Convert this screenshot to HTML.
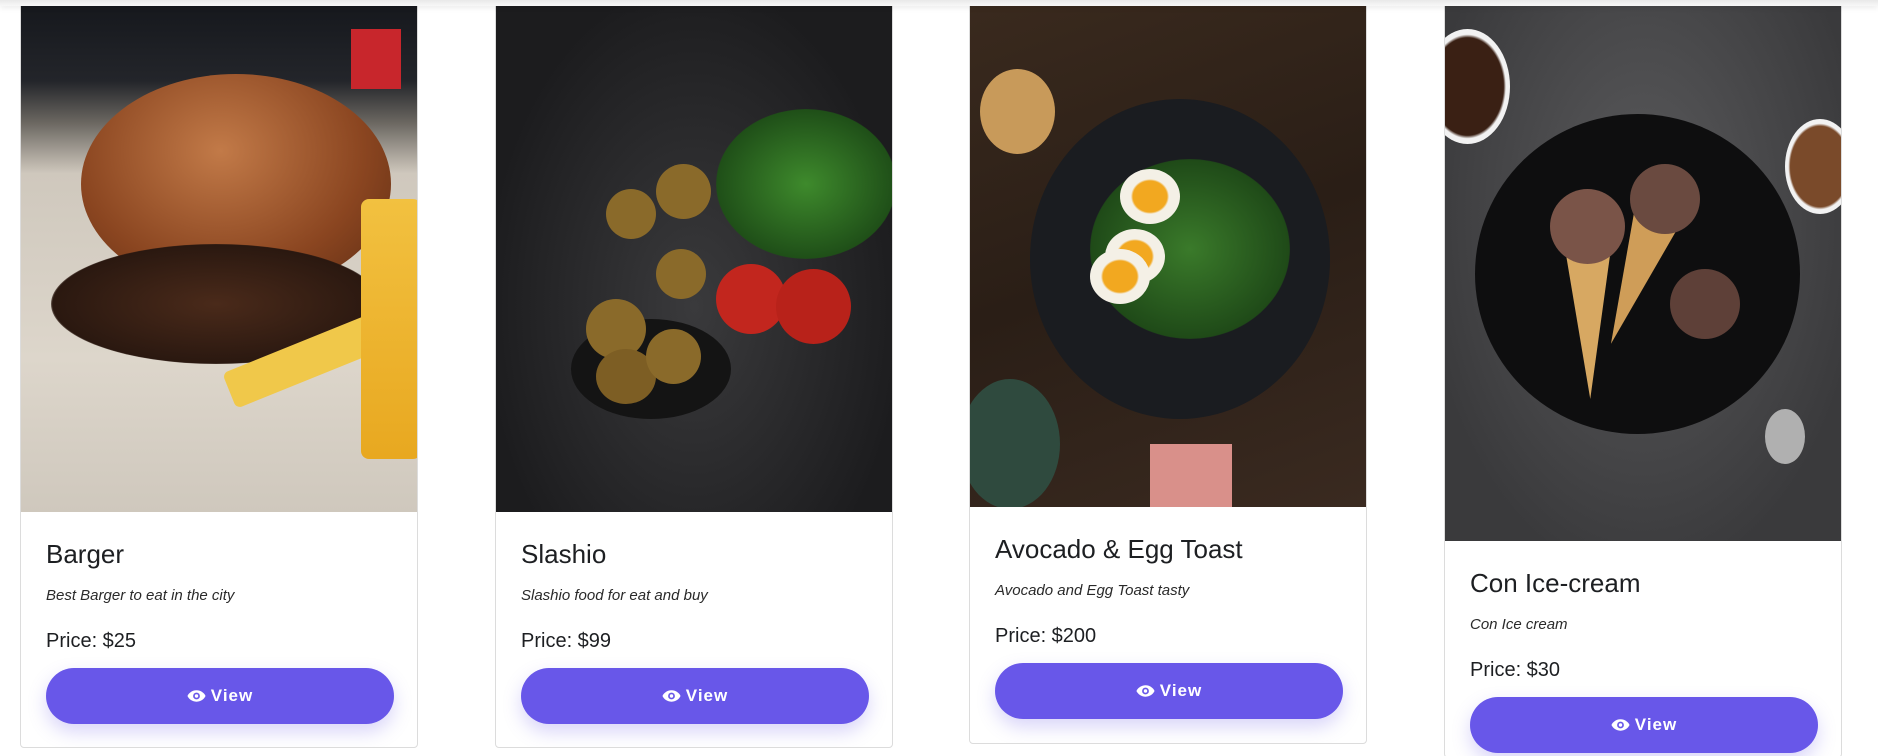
<!DOCTYPE html>
<html style="width:1878px;height:756px;overflow:hidden"><head><meta charset="utf-8"><style>
*{box-sizing:border-box;margin:0;padding:0}
html,body{width:1878px;height:756px;overflow:hidden}
body{background:#fff;position:relative;font-family:"Liberation Sans",sans-serif;color:#212529}
.topbar{position:absolute;left:0;top:0;width:1878px;height:6px;background:linear-gradient(#e9e9e9,#f8f8f8);box-shadow:0 2px 6px rgba(0,0,0,.08);z-index:3}
.card{position:absolute;width:398px;border:1px solid #dcdcdc;border-radius:4px;background:#fff;overflow:hidden}
.img{position:relative;width:100%;overflow:hidden}
.b{position:relative}
.t{position:absolute;left:25px;font-size:26px;line-height:30px;white-space:nowrap;color:#1d1f22}
.d{position:absolute;left:25px;font-size:15px;line-height:18px;font-style:italic;color:#2a2a2a}
.p{position:absolute;left:25px;font-size:20px;line-height:24px;color:#1d1f22}
.btn{position:absolute;left:25px;width:348px;height:56px;border-radius:28px;background:#6857e9;color:#fff;font-weight:bold;font-size:17px;letter-spacing:1px;display:flex;align-items:center;justify-content:center;box-shadow:0 8px 18px rgba(104,87,233,.25)}
.btn svg{margin-right:5px}
.sh{position:absolute;border-radius:50%}
</style></head><body>
<div class="topbar"></div>

<!-- card 1 -->
<div class="card" style="left:20px;top:-2px;height:750px">
 <div class="img" style="height:513px;background:linear-gradient(180deg,#15171c 0%,#23252a 16%,#6a6660 24%,#cfc8bd 34%,#ddd6cb 70%,#cfc8bd 100%)">
  <div class="sh" style="left:60px;top:75px;width:310px;height:220px;background:radial-gradient(ellipse at 45% 35%,#c27a48,#8a4520 60%,#5a2a12)"></div>
  <div class="sh" style="left:30px;top:245px;width:330px;height:120px;background:radial-gradient(ellipse,#4a2a1a,#2a1810 70%,transparent 72%)"></div>
  <div style="position:absolute;left:200px;top:330px;width:230px;height:38px;background:#f0c84a;transform:rotate(-22deg);border-radius:6px"></div>
  <div style="position:absolute;left:340px;top:200px;width:60px;height:260px;background:linear-gradient(#f2c140,#e8a820);border-radius:8px"></div>
  <div style="position:absolute;left:330px;top:30px;width:50px;height:60px;background:#c8262c"></div>
 </div>
 <div class="b">
  <div class="t" style="top:27px">Barger</div>
  <div class="d" style="top:75px">Best Barger to eat in the city</div>
  <div class="p" style="top:117px">Price: $25</div>
  <div class="btn" style="top:156px"><svg width="19" height="14" viewBox="0 0 20 14"><path d="M10 1C5 1 1.5 4.5 0.5 7 1.5 9.5 5 13 10 13s8.5-3.5 9.5-6C18.5 4.5 15 1 10 1z" fill="#fff"/><circle cx="10" cy="7" r="3.6" fill="#6857e9"/><circle cx="10" cy="7" r="1.8" fill="#fff"/></svg>View</div>
 </div>
</div>

<!-- card 2 -->
<div class="card" style="left:495px;top:-2px;height:750px">
 <div class="img" style="height:513px;background:radial-gradient(ellipse at 50% 60%,#3a3a3c,#1c1c1e 75%)">
  <div class="sh" style="left:220px;top:110px;width:180px;height:150px;background:radial-gradient(#3e8a2c,#1f4f18 70%,transparent 72%)"></div>
  <div class="sh" style="left:220px;top:265px;width:70px;height:70px;background:#c2261e"></div>
  <div class="sh" style="left:280px;top:270px;width:75px;height:75px;background:#b8221a"></div>
  <div class="sh" style="left:75px;top:320px;width:160px;height:100px;background:#141414"></div>
  <div class="sh" style="left:90px;top:300px;width:60px;height:60px;background:#8a6a2a"></div>
  <div class="sh" style="left:100px;top:350px;width:60px;height:55px;background:#7d5e24"></div>
  <div class="sh" style="left:150px;top:330px;width:55px;height:55px;background:#8a6a2a"></div>
  <div class="sh" style="left:110px;top:190px;width:50px;height:50px;background:#8a6a2a"></div>
  <div class="sh" style="left:160px;top:165px;width:55px;height:55px;background:#8a6a2a"></div>
  <div class="sh" style="left:160px;top:250px;width:50px;height:50px;background:#8a6a2a"></div>
 </div>
 <div class="b">
  <div class="t" style="top:27px">Slashio</div>
  <div class="d" style="top:75px">Slashio food for eat and buy</div>
  <div class="p" style="top:117px">Price: $99</div>
  <div class="btn" style="top:156px"><svg width="19" height="14" viewBox="0 0 20 14"><path d="M10 1C5 1 1.5 4.5 0.5 7 1.5 9.5 5 13 10 13s8.5-3.5 9.5-6C18.5 4.5 15 1 10 1z" fill="#fff"/><circle cx="10" cy="7" r="3.6" fill="#6857e9"/><circle cx="10" cy="7" r="1.8" fill="#fff"/></svg>View</div>
 </div>
</div>

<!-- card 3 -->
<div class="card" style="left:969px;top:-2px;height:746px">
 <div class="img" style="height:508px;background:linear-gradient(160deg,#3a2a1e,#2a1e16 50%,#3a2a20)">
  <div class="sh" style="left:60px;top:100px;width:300px;height:320px;background:#1a1c20"></div>
  <div class="sh" style="left:120px;top:160px;width:200px;height:180px;background:radial-gradient(#3a7a2a,#1f4a18 70%,transparent 72%)"></div>
  <div class="sh" style="left:150px;top:170px;width:60px;height:55px;background:radial-gradient(#f2a820 40%,#f4f0e6 45%)"></div>
  <div class="sh" style="left:135px;top:230px;width:60px;height:55px;background:radial-gradient(#f2a820 40%,#f4f0e6 45%)"></div>
  <div class="sh" style="left:120px;top:250px;width:60px;height:55px;background:radial-gradient(#f2a820 40%,#f4f0e6 45%)"></div>
  <div style="position:absolute;left:180px;top:445px;width:82px;height:63px;background:#d9908a"></div>
  <div class="sh" style="left:-10px;top:380px;width:100px;height:130px;background:#2f4a3e"></div>
  <div class="sh" style="left:10px;top:70px;width:75px;height:85px;background:#c89a5a"></div>
 </div>
 <div class="b">
  <div class="t" style="top:27px">Avocado &amp; Egg Toast</div>
  <div class="d" style="top:75px">Avocado and Egg Toast tasty</div>
  <div class="p" style="top:117px">Price: $200</div>
  <div class="btn" style="top:156px"><svg width="19" height="14" viewBox="0 0 20 14"><path d="M10 1C5 1 1.5 4.5 0.5 7 1.5 9.5 5 13 10 13s8.5-3.5 9.5-6C18.5 4.5 15 1 10 1z" fill="#fff"/><circle cx="10" cy="7" r="3.6" fill="#6857e9"/><circle cx="10" cy="7" r="1.8" fill="#fff"/></svg>View</div>
 </div>
</div>

<!-- card 4 -->
<div class="card" style="left:1444px;top:-2px;height:760px">
 <div class="img" style="height:542px;background:radial-gradient(ellipse at 50% 40%,#5a5a5c,#3a3a3c 80%)">
  <div class="sh" style="left:30px;top:115px;width:325px;height:320px;background:#0e0e0f"></div>
  <div class="sh" style="left:-20px;top:30px;width:85px;height:115px;background:radial-gradient(#3a2014 60%,#f2f2f2 64%)"></div>
  <div class="sh" style="left:340px;top:120px;width:70px;height:95px;background:radial-gradient(#7a4a2a 60%,#f2f2f2 64%)"></div>
  <div style="position:absolute;left:115px;top:220px;width:55px;height:180px;background:#d7a862;clip-path:polygon(0 0,100% 0,55% 100%)"></div>
  <div class="sh" style="left:105px;top:190px;width:75px;height:75px;background:#7a5448"></div>
  <div style="position:absolute;left:165px;top:180px;width:60px;height:170px;background:#cf9d58;transform:rotate(20deg);clip-path:polygon(0 0,100% 0,50% 100%)"></div>
  <div class="sh" style="left:185px;top:165px;width:70px;height:70px;background:#6a4a40"></div>
  <div class="sh" style="left:225px;top:270px;width:70px;height:70px;background:#5e4038"></div>
  <div class="sh" style="left:320px;top:410px;width:40px;height:55px;background:#b0b0b0"></div>
 </div>
 <div class="b">
  <div class="t" style="top:27px">Con Ice-cream</div>
  <div class="d" style="top:75px">Con Ice cream</div>
  <div class="p" style="top:117px">Price: $30</div>
  <div class="btn" style="top:156px"><svg width="19" height="14" viewBox="0 0 20 14"><path d="M10 1C5 1 1.5 4.5 0.5 7 1.5 9.5 5 13 10 13s8.5-3.5 9.5-6C18.5 4.5 15 1 10 1z" fill="#fff"/><circle cx="10" cy="7" r="3.6" fill="#6857e9"/><circle cx="10" cy="7" r="1.8" fill="#fff"/></svg>View</div>
 </div>
</div>
</body></html>
